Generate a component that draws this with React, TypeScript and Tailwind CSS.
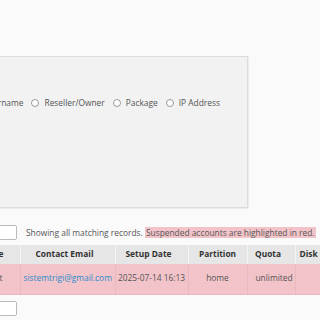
const radios = ["Reseller/Owner", "Package", "IP Address"];

const Radio = ({ label }: { label: string }) => (
  <label className="flex items-center gap-[5px]">
    <span className="h-[8px] w-[8px] rounded-full border border-[#9a9a9a] bg-white" />
    <span>{label}</span>
  </label>
);

const App = () => {
  return (
    <div className="h-[320px] w-[320px] overflow-hidden bg-[#fafafa] font-['Open_Sans',sans-serif] text-[8.4px] text-[#555]">
      {/* Search panel */}
      <div className="ml-[-40px] mt-[56px] flex h-[152px] w-[288px] flex-col border border-[#dcdcdc] bg-[#f2f2f2] shadow-[1px_1px_0_#ececec]">
        <div className="ml-[22px] mt-[40px] flex items-center gap-[8px] whitespace-nowrap">
          <span>Username</span>
          {radios.map(r => (
            <Radio key={r} label={r} />
          ))}
        </div>
      </div>

      {/* Records bar */}
      <div className="mt-[17px] flex items-center gap-[9px] whitespace-nowrap">
        <div className="ml-[-20px] flex h-[15px] w-[37px] items-center justify-end overflow-hidden rounded-[2px] border border-[#bbb] bg-white pr-[16px] text-[#2a4a7a]">
          50
        </div>
        <p className="leading-[13px]">
          Showing all matching records.{" "}
          <span className="bg-[#f2c4c9] px-[1px]">Suspended accounts are highlighted in red.</span>
        </p>
      </div>

      {/* Accounts table */}
      <table className="ml-[-40px] mt-[5px] w-[395px] table-fixed border-collapse whitespace-nowrap">
        <colgroup>
          <col className="w-[60px]" />
          <col className="w-[95px]" />
          <col className="w-[73px]" />
          <col className="w-[59px]" />
          <col className="w-[48px]" />
          <col className="w-[60px]" />
        </colgroup>
        <thead>
          <tr className="h-[19px] bg-[#e6e6e6] font-bold text-[#333]">
            <th className="border-r border-[#f4f4f4] pr-[16px] text-right">Package</th>
            <th className="border-r border-[#f4f4f4] pr-[6px] text-center">Contact Email</th>
            <th className="border-r border-[#f4f4f4] pr-[6px] text-center">Setup Date</th>
            <th className="border-r border-[#f4f4f4] text-center">Partition</th>
            <th className="border-r border-[#f4f4f4] pr-[6px] text-center">Quota</th>
            <th className="pl-[4px] text-left">Disk Used</th>
          </tr>
        </thead>
        <tbody>
          <tr className="h-[30px] border-b border-[#e9b9bf] bg-[#f2c4c9]">
            <td className="border-r border-[#e9b9bf] pr-[17px] text-right">default</td>
            <td className="border-r border-[#e9b9bf] pl-[3px] text-[#2e8bcb]">sistemtrigi@gmail.com</td>
            <td className="border-r border-[#e9b9bf] text-center">2025-07-14 16:13</td>
            <td className="border-r border-[#e9b9bf] text-center">home</td>
            <td className="border-r border-[#e9b9bf] pl-[6px] text-center">unlimited</td>
            <td />
          </tr>
        </tbody>
      </table>

      <div className="mt-[6px] ml-[-20px] flex h-[15px] w-[37px] items-center justify-end overflow-hidden rounded-[2px] border border-[#bbb] bg-white pr-[16px] text-[#2a4a7a]">
        50
      </div>
    </div>
  );
};

export default App;
